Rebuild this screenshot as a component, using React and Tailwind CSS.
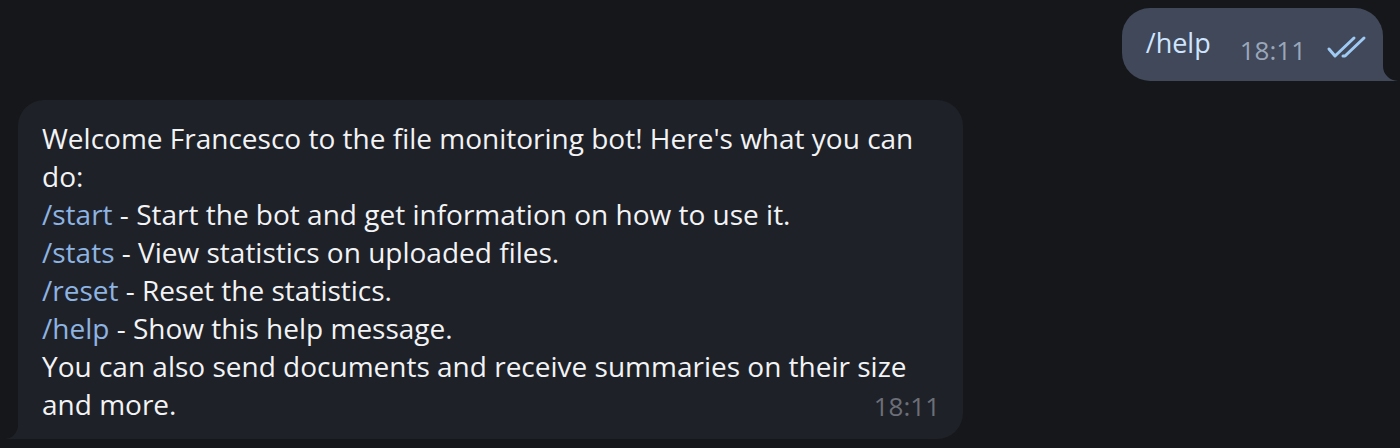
import React from 'react';

const font = { fontFamily: '"Open Sans", "Noto Sans", sans-serif' };

const commands = [
  { cmd: '/start', text: ' - Start the bot and get information on how to use it.' },
  { cmd: '/stats', text: ' - View statistics on uploaded files.' },
  { cmd: '/reset', text: ' - Reset the statistics.' },
  { cmd: '/help', text: ' - Show this help message.' },
];

const DoubleCheck = () => (
  <svg width="42" height="24" viewBox="0 0 42 24" fill="none" stroke="#9fcaf4" strokeWidth="3" strokeLinecap="round" strokeLinejoin="round">
    <path d="M3 14 L9 21 L28 3" />
    <path d="M17 21 L19 21 L38 3" />
  </svg>
);

const App = () => {
  return (
    <div className="w-[1400px] h-[448px] bg-[#16171b] overflow-hidden flex flex-col pt-2" style={font}>
      {/* outgoing */}
      <div className="flex justify-end pr-[17px]">
        <div className="relative">
          <div className="h-[73px] bg-[#404859] rounded-[28px] rounded-br-none flex items-center pl-6 pr-[15px]">
            <span className="text-[27px] text-[#cfe5ff] -mt-[3px]">/help</span>
            <span className="ml-[29px] mt-[12px] text-[26px] text-[#9aa7ba]">18:11</span>
            <span className="ml-[20px] mt-[4px]"><DoubleCheck /></span>
          </div>
          <svg className="absolute -right-[15px] bottom-0" width="15" height="15" viewBox="0 0 15 15">
            <path d="M0 0 A15 15 0 0 0 15 15 L0 15 Z" fill="#404859" />
          </svg>
        </div>
      </div>

      {/* incoming */}
      <div className="flex pl-[18px] mt-[19px]">
        <div className="relative">
          <div className="w-[945px] bg-[#1f2128] rounded-[26px] rounded-bl-none pl-6 pr-[23px] pt-[19px] pb-[16px] text-[28px] leading-[38px] text-[#f2f3f5] whitespace-nowrap">
            <div>Welcome Francesco to the file monitoring bot! Here's what you can</div>
            <div>do:</div>
            {commands.map(c => (
              <div key={c.cmd}>
                <span className="text-[#8db4e2]">{c.cmd}</span>{c.text}
              </div>
            ))}
            <div>You can also send documents and receive summaries on their size</div>
            <div className="flex justify-between items-end">
              <span>and more.</span>
              <span className="text-[26px] text-[#6c6f77] translate-y-[2px]">18:11</span>
            </div>
          </div>
          <svg className="absolute -left-[14px] bottom-0" width="14" height="14" viewBox="0 0 14 14">
            <path d="M14 0 A14 14 0 0 1 0 14 L14 14 Z" fill="#1f2128" />
          </svg>
        </div>
      </div>
    </div>
  );
};

export default App;
